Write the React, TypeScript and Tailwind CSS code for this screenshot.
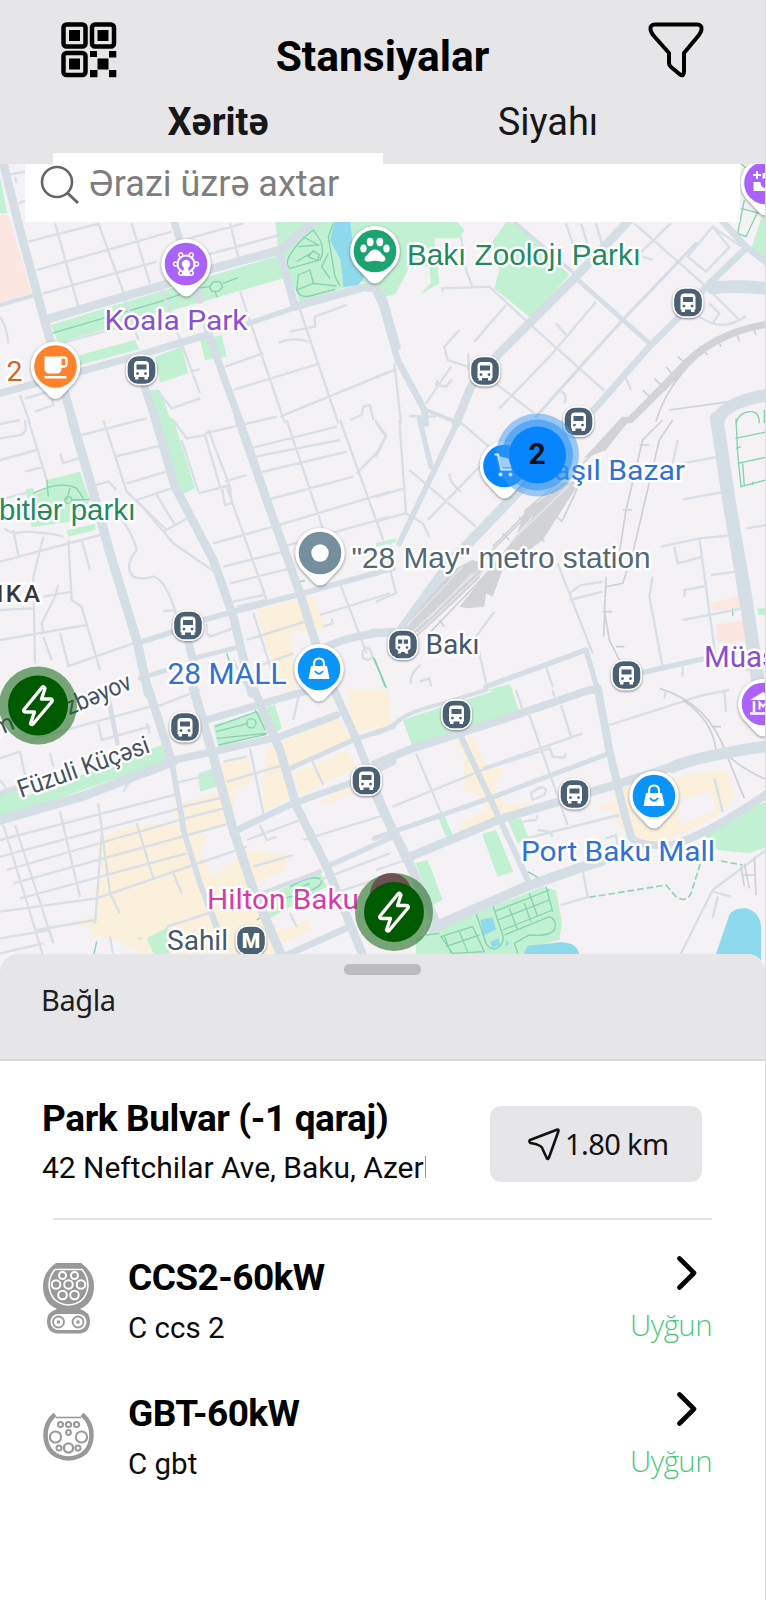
import React from "react";

type Tile = {
  x: number;
  y: number;
  pink?: string;
  green?: string;
  beige?: string;
  hole?: string;
  water?: string;
  minor?: string;
  roads?: [number, string][];
  path?: string;
  dash?: string;
  rail?: string;
  gaps?: string;
  track?: string;
};

/* Map vectors, stored per tile in units of a third of a pixel. */
const tiles: Tile[] = [
  {
    x: 0,
    y: 160,
    pink: "M0,165 L25,165 L95,400 L0,428Z",
    green:
      "M0,50 L22,160 L0,160Z M152,495 L830,288 L850,355 L175,548Z M240,585 L405,540 L418,568 L240,615Z M465,590 L545,560 L565,640 L480,668Z M450,690 L480,690 L515,790 L465,790Z M600,540 L665,525 L680,590 L615,600Z M825,180 L1190,180 L1190,400 L1150,400 L1090,365 L900,425 L835,270Z",
    water: "M1005,180 L1050,180 L1058,250 L1097,345 L1075,375 L1030,382 L1022,300 L990,240Z",
    minor:
      "M85,245 L300,190 M110,330 L515,215 M130,400 L470,305 M165,190 L235,440 M295,190 L375,410 M395,190 L450,370 M550,240 L730,190 M600,290 L840,225 M690,190 L715,290 M20,45 L75,35 M45,50 L50,70 M55,130 L80,120 M720,395 L855,790 M900,450 L1015,790 M1040,435 L945,470 L945,500 L870,515 M835,548 Q880,530 925,545 M675,620 L790,580 M700,690 L960,610 M840,770 L1170,635 M180,550 L480,470 M375,420 L415,540 M485,390 L600,700 M470,690 L515,745 L600,715 M570,635 L600,628 M0,470 Q20,500 25,550 M60,705 L90,790 M75,715 L200,680 M105,755 L160,735 L155,715 M1050,780 L1085,765 L1090,740 L1110,735 L1120,780",
    roads: [
      [26, "M5,-10 L60,210 L130,470 L150,540 L220,790"],
      [12, "M0,435 L95,408"],
      [26, "M140,478 L490,375 L640,325 L840,270 L950,180"],
      [22, "M0,700 L250,632 L400,590 L620,525"],
      [16, "M730,495 L880,445"],
      [24, "M840,280 L885,440 L1090,382 L1125,385 L1150,420 L1190,560"],
      [22, "M520,180 L545,255 L600,420 M620,500 L660,620 L722,790"],
      [24, "M430,670 L470,790"],
    ],
    path: "M155,520 L480,425 L590,385 M590,385 L630,380 M668,370 L715,353 M640,365 h20 l8,15 l-12,14 h-20 l-8,-14Z M645,395 L652,412 M1000,190 L985,230 L990,260 L1005,350 L1020,378 M940,210 Q900,240 880,270 Q850,310 870,325 L960,300 Q975,270 960,240Z M900,225 L955,255 L895,260 M890,305 L940,275 M985,280 L965,320 L990,355 M895,345 L930,330 L940,370 L890,390Z M940,370 L1010,378 M890,390 Q900,415 930,408 L1005,388 M925,290 l15,-18 l18,12 l-6,18Z",
  },
  {
    x: 376,
    y: 160,
    green:
      "M0,180 L240,180 L265,210 L250,235 L175,235 L190,370 L130,405 L165,370 L160,320 L100,320 L60,400 L20,415 L0,380Z M395,180 L430,200 L580,345 L465,475 L355,385 L370,330 L345,250Z M1160,160 L1175,160 L1175,320 L1125,270Z",
    minor:
      "M470,500 L685,692 M195,385 L290,382 L340,380 L470,500 M200,395 v-10 M255,230 L270,330 L290,382 M295,545 L390,435 M775,190 L985,375 M885,190 L760,310 M660,425 L530,580 L370,745 M250,510 L205,560 L215,600 L275,620 M225,620 L150,730 M185,660 L180,675 L210,680 L228,658 M277,580 v50 M320,640 L475,760 M540,490 L570,525 M555,695 Q575,700 565,730 M935,290 L990,335 L1060,262 L1010,200 Z M1010,200 L1095,260 M0,650 L55,630 M55,610 L75,790 M570,190 L590,250 M615,190 L640,270 M660,190 L680,260 M750,655 L765,690 M1000,390 L1090,480 M970,470 Q1040,520 1110,468 M1000,430 L1030,460 L1010,490 M800,290 L830,300 M100,768 L180,770",
    roads: [
      [10, "M415,185 L600,345"],
      [9, "M960,250 L740,480 L640,590 L480,770"],
      [26, "M760,180 L600,350 L360,590 L285,680 L240,790"],
      [20, "M0,395 L20,440 L65,600 L145,750 L150,790"],
      [12, "M150,750 L250,790"],
      [14, "M600,355 L820,550"],
      [20, "M1110,265 L1000,370 L900,480 L820,560 L640,765"],
      [38, "M1010,384 Q1060,375 1175,385"],
      [20, "M1040,185 L1110,260 L1175,310"],
      [38, "M1025,790 Q1030,730 1175,705"],
    ],
    path: "M1095,10 L1110,25 M1105,120 L1085,220 L1110,230 L1145,155 M1095,145 L1150,160 M1045,190 L1090,225 M1080,790 Q1090,755 1125,755 Q1150,755 1150,790 M1165,750 V790",
    track: "M840,785 Q870,680 965,590 M880,750 L1170,710 M800,690 l20,20 M835,655 l25,25 M870,620 l25,30 M905,590 l30,25 M970,560 l25,25 M1020,530 l15,30 M1080,515 l10,30 M1130,500 l10,25",
    rail: "M1175,482 Q1000,508 895,630 L738,790 L768,790 L915,645 Q1010,530 1175,503Z",
  },
  {
    x: 0,
    y: 420,
    green:
      "M470,-5 L520,-5 L585,205 L550,222 L515,140Z M140,180 L240,155 L268,235 L265,250 L210,305 L95,322 L85,260 L78,208 L100,205 L105,225 L140,205Z M200,330 L285,312 L287,330 L205,350Z M1150,370 L1175,362 V375Z",
    beige:
      "M770,565 L850,548 L940,528 L975,620 L930,640 L870,630 L880,690 L880,800 L850,810 L800,680Z",
    minor:
      "M0,55 L65,45 L78,30 L75,0 M85,0 L140,180 M0,12 L60,0 M0,120 L110,90 M75,155 L130,140 M180,100 L190,130 L235,115 M0,240 L80,218 M310,0 L380,215 L500,330 M245,45 L440,-5 M345,110 L490,75 M380,190 L500,155 M410,240 L530,200 M410,240 L520,370 L650,460 M490,335 L570,290 M470,225 L525,315 M270,200 L325,185 L350,210 M345,270 Q400,340 410,390 Q370,440 400,470 Q420,480 460,470 Q500,480 530,590 M490,573 L530,570 M0,425 L300,345 M15,325 Q30,345 80,335 Q160,340 190,350 M40,330 L55,405 M130,350 L100,470 L105,730 M205,360 L215,540 L245,560 L300,750 M245,360 L270,450 M175,495 L165,530 L125,610 L130,640 M0,660 L260,615 M130,530 L215,515 M0,570 L100,565 M180,640 L205,735 M130,650 L155,720 M200,740 L400,670 M520,0 L560,55 L615,45 L660,200 M625,30 L690,200 L695,250 L675,255 L665,200 M595,220 L690,195 M545,60 L595,215 M615,40 L830,-10 M675,185 L740,165 M750,85 L1010,20 M765,110 L1020,60 M770,160 L1040,95 M800,240 L1060,170 M820,320 L1170,215 M850,380 L1170,290 M680,200 L800,540 M860,0 L970,330 M1020,0 L1150,360 M1125,0 L1158,45 L1130,100 L1070,160 M640,370 L820,320 M670,440 L850,395 M690,490 L870,445 M700,545 L790,525 M710,560 L795,540 M620,610 L620,640 L630,650 L700,625 M960,585 L1170,520 M995,595 L998,610 L970,620 M1020,490 L1100,700 M760,580 L830,800 M740,660 L930,600 M770,740 L880,700 M1090,690 q10,-15 20,0 q15,25 -5,30 q-25,-5 -15,-30 M700,720 L740,800",
    roads: [
      [28, "M215,-5 L275,200 L330,400 L410,660 L445,820"],
      [26, "M465,-5 L525,200 L640,420 L700,590 L755,820"],
      [26, "M715,-5 L800,240 L900,520 L960,710"],
      [17, "M410,670 L520,635"],
      [17, "M610,600 L700,575 L890,525 L1180,445"],
      [24, "M560,650 L582,730"],
      [14, "M580,715 L720,680"],
      [24, "M980,680 Q1060,642 1180,635"],
      [14, "M420,775 L520,745"],
    ],
    path: "M140,175 L145,230 M100,220 Q180,180 230,205 L250,235 M210,205 L200,240 M195,240 a10,10 0 1 0 20,0 a10,10 0 1 0 -20,0 M215,240 L270,238 M900,485 L915,482 M680,700 L690,730 M1118,710 L1140,760 L1155,800",
  },
  {
    x: 376,
    y: 420,
    pink: "M1005,550 L1090,528 L1100,560 L1010,572Z M1020,615 L1105,600 L1118,660 L1070,670 L1025,665Z",
    green: "M325,812 L400,793 L412,812Z M0,370 L60,355 L60,365 L0,380Z M1145,565 h30 v20 h-30Z",
    minor:
      "M0,110 L30,50 L0,10 M70,0 L90,280 M0,230 L85,205 M0,305 L90,280 L140,310 L160,350 M100,150 L300,320 M220,160 Q220,190 255,215 M155,300 L330,120 M30,400 L60,520 L0,545 M245,0 L350,90 M545,430 L650,700 M580,520 L615,495 L680,485 M580,540 L680,515 M905,60 L890,130 M920,130 L1030,110 M920,238 L1050,215 M855,380 L970,355 L1020,720 M895,380 L905,430 L980,410 M970,355 L1080,345 M1005,465 L1080,455 M925,530 L925,510 L990,498 M920,600 L1100,565 M830,470 L820,530 L860,740 M355,575 L300,650 L330,790 M1110,325 L1170,315 M105,790 Q100,760 135,735 M130,785 L160,775 L165,800 M510,740 L530,800 M920,740 L920,770 M1110,750 L1170,740",
    roads: [
      [16, "M130,-5 L165,140"],
      [17, "M250,-5 L180,140 L70,370"],
      [30, "M450,190 L220,430 L80,625"],
      [40, "M1022,-5 L1060,250 L1110,540 L1150,810"],
      [24, "M-10,638 L70,638"],
      [16, "M330,800 L630,690 L665,810"],
      [16, "M800,757 L980,717"],
    ],
    path: "M1080,-5 L1085,100 L1095,200 L1170,180 M1078,55 L1175,35 M1080,85 L1095,80 M1085,130 L1170,112 M1100,130 L1105,200 M1130,185 v10 M-5,715 L32,805 M1070,565 v22",
    rail: "M250,560 L420,350 L440,290 L510,230 L580,190 L600,205 L545,290 L500,360 L380,450 L350,530 L330,520 L325,560 L275,565Z M610,130 L738,-10 L768,-10 L690,90 L625,115Z M90,640 L110,590 L230,450 L290,420 L325,430 L310,475 L200,580 L140,635Z M445,270 L590,150 L600,190 L500,240 L440,310Z",
    gaps: "M105,640 L330,430 M130,635 L345,430 M95,615 L260,440 M420,350 L580,195 M400,370 L470,290 M155,600 L290,460 M480,250 L590,160",
    track: "M120,650 L330,440 M150,650 L400,390 M330,410 L500,240 M350,380 L500,230 M600,150 L735,20 M540,230 L620,170 L560,300 M430,290 l15,20 M380,340 l20,20 M540,290 l20,15 M490,350 l15,15 M190,600 l15,20 M860,0 L800,60 L750,270 L730,400 M890,0 L850,60 L770,400 L740,490 L690,500 L685,570 L700,660 L740,740 M790,75 h30 M740,270 h28 M680,575 h28 M690,470 L683,650 M720,680 h25",
  },
  {
    x: 0,
    y: 690,
    green:
      "M0,318 L50,300 L60,325 L450,178 L485,165 L500,212 L0,387Z M640,105 L790,60 L805,130 L655,172Z M800,50 L825,43 L845,115 L825,130Z M595,250 L640,235 L650,290 L600,305Z M820,610 L960,545 L980,590 L800,690Z M440,745 L505,710 L510,800 L465,800Z",
    beige:
      "M665,220 L745,205 L760,270 L700,300 L705,410 L670,370Z M800,170 L840,160 L880,320 L790,365 L790,270Z M830,160 L1010,85 L1060,150 L960,200 L870,235Z M1040,0 L1170,0 L1170,100 L1060,130Z M880,250 L1040,180 L1070,230 L900,320Z M960,330 L1050,290 L1060,310 L970,345Z M515,350 L660,305 L675,400 L560,440Z M285,450 L400,405 L550,400 L620,440 L600,490 L640,560 L740,480 L860,495 L860,540 L760,580 L800,690 L850,720 L930,690 L930,720 L850,760 L830,800 L440,800 L330,740 L270,740 L290,640 L280,600 L310,560Z M235,690 L290,680 L285,705 L235,712Z M860,0 h40 l-40,20Z",
    minor:
      "M10,405 L130,800 M45,405 L160,760 M180,365 L240,620 M295,340 L330,610 L360,670 M410,400 L460,565 M305,430 L290,640 L285,700 M520,550 L545,610 M0,450 L540,310 M0,500 L540,355 M20,540 L540,390 M40,580 L690,400 M60,625 L560,490 M0,665 L290,625 L740,470 M110,720 L285,690 M0,745 L150,720 M0,790 L130,760 M550,350 L680,320 M555,385 L690,350 M370,305 L385,280 M520,280 L650,250 M780,405 L800,450 L830,440 M750,175 L790,370 M670,215 L740,200 M930,200 L970,285 M680,275 L850,225 M0,205 L60,185 L80,280 M0,270 L30,310 M150,190 L160,230 M90,150 L450,50 M295,100 L305,150 L450,110 M440,100 L450,130 M470,50 L600,0 M910,450 L1170,370 M740,450 L900,390 M1000,610 L1170,555 M870,670 L890,710 M500,710 L640,665 L655,710 M330,740 L340,800 M415,745 h12 M960,570 L1170,490 M900,0 L880,90 M760,530 L880,495",
    roads: [
      [26, "M445,-5 L495,150 L515,215"],
      [17, "M515,215 L545,380 L550,420 L600,580 L650,715"],
      [28, "M580,-5 L640,200 L700,420 L760,600 L850,810"],
      [26, "M760,-5 L840,180 L890,350 L980,530 L1090,800"],
      [24, "M1000,-5 L1070,150 L1175,420"],
      [28, "M-5,392 L250,318 L520,215"],
      [22, "M500,215 L640,185 L840,140 L1010,75"],
      [22, "M620,90 L790,40 L930,0"],
      [16, "M-5,312 L60,290"],
      [20, "M700,425 L880,340 L1050,280 L1180,215"],
      [15, "M860,240 L1060,150 L1180,110"],
      [16, "M980,530 L1180,440"],
      [14, "M760,620 L960,545"],
      [20, "M860,795 L1050,710"],
      [14, "M325,20 L352,160"],
    ],
    path: "M645,110 L770,65 L795,120 M648,125 L745,100 M650,145 L800,130 M655,165 L800,133 M740,100 a14,14 0 1 0 28,0 a14,14 0 1 0 -28,0 M765,60 L780,85 M870,590 Q940,550 965,570 Q970,600 850,625 M880,600 L930,580 M290,755 L280,800 M770,690 l20,-12",
  },
  {
    x: 376,
    y: 690,
    green:
      "M80,90 L200,50 L385,-5 L405,-5 L430,65 L110,170Z M185,380 L205,378 L230,435 L210,440Z M318,432 L360,420 L412,545 L365,560Z M118,520 L155,510 L200,630 L170,645Z M395,390 L435,385 L458,445 L425,460Z M985,435 L1140,345 L1175,335 L1175,470 L1120,490 L1025,480Z M120,745 L500,590 L540,600 L558,700 L550,750 L455,775 L440,800 L120,800Z",
    water:
      "M440,800 L455,767 Q500,764 550,757 Q605,755 612,800Z M1017,800 L1060,675 Q1072,652 1110,655 Q1152,665 1155,710 V860 L1017,840Z M313,690 L350,682 L360,718 L322,737Z M343,755 l25,-10 l5,20 l-25,8Z M390,750 l10,12 l-10,5Z",
    beige:
      "M240,150 L295,145 L335,238 L385,232 L350,290 L390,345 L470,338 L460,372 L255,422 L250,400 L330,360 L300,310 L262,300 L265,210Z M710,290 L1050,238 L1075,320 L1020,380 L890,440 L850,465 L770,440 L740,420 L720,390 L715,360 L670,360 L670,345 L715,335Z M0,40 L40,105 L0,118Z",
    hole: "M905,330 L1000,305 L1020,360 L915,405Z",
    minor:
      "M50,350 L320,240 L520,175 M120,190 L200,380 M460,75 L575,405 M555,45 L585,140 M320,235 L620,130 M700,105 L920,35 Q970,15 1060,0 M420,0 L440,60 M0,540 L90,510 M450,445 L730,375 M620,540 L635,620 M555,645 L640,620 M1170,480 L1010,600 L960,700 L910,800 M1010,605 L1065,620 M1025,620 L1010,685 M1045,0 L1050,65 M1015,265 L1040,365 M870,0 L865,25 M520,170 L530,200 L565,203 L570,190 M465,310 Q500,280 510,300 L505,315 L470,330Z M485,420 L520,425 L530,440 M440,395 L480,390 L485,375 M530,0 L535,20 M690,445 L720,435 L725,470",
    roads: [
      [12, "M-5,132 Q40,120 70,90 Q100,65 200,40 L330,0"],
      [24, "M-5,222 L110,175 L420,75 L640,0 L665,0"],
      [24, "M665,-5 L700,180 L740,350 L765,440 Q780,470 890,465 Q1000,430 1175,310"],
      [26, "M90,505 L380,385 L700,290 L890,230"],
      [34, "M890,232 Q950,202 1175,168"],
      [28, "M-5,305 L50,420 L100,520 L185,710"],
      [15, "M-5,445 L340,325 L700,190"],
      [18, "M255,140 L340,320 L460,580"],
      [30, "M165,715 L450,590 L620,530 L680,512"],
    ],
    path: "M455,545 L490,565 M195,740 L290,710 L325,785 L230,790Z M205,738 L225,790 M250,725 L275,785 M210,770 L310,735 M300,670 L330,760 Q350,790 375,765 Q385,750 380,735 L350,645 M355,665 L520,600 M365,690 L520,630 M380,720 L530,660 M385,735 L520,680 Q545,690 535,720 Q520,740 460,735 L415,760 L425,790 M400,655 L425,720 M445,640 L465,695 M510,590 L530,665 M460,610 L485,680 M150,735 l40,-5",
    dash: "M640,622 L870,585 L900,620 Q930,640 945,610 L975,515 M1035,513 L1100,525",
    track: "M850,-5 Q1000,40 1050,190 Q1100,240 1175,270 M920,30 Q1010,90 1020,180 M1010,110 h25 M1050,190 L1105,325 M1095,530 L1105,590 M1105,520 L1120,595 M1135,500 L1140,615 M1100,555 h35",
  },
];

type PathKey = "pink" | "green" | "beige" | "hole" | "water" | "minor" | "path" | "dash" | "rail" | "gaps" | "track";

function Layer({ name, className, dash }: { name: PathKey; className: string; dash?: string }) {
  return (
    <>
      {tiles.map((t, i) =>
        t[name] ? (
          <path
            key={i}
            d={t[name]}
            transform={`translate(${t.x} ${t.y}) scale(0.33333)`}
            className={className}
            strokeDasharray={dash}
          />
        ) : null,
      )}
    </>
  );
}

function Pin({ x, y, color, children }: { x: number; y: number; color: string; children?: React.ReactNode }) {
  return (
    <g transform={`translate(${x} ${y})`}>
      <path
        d="M0,-25 A25,25 0 0 1 19,16 L6,30 Q0,35 -6,30 L-19,16 A25,25 0 0 1 0,-25Z"
        fill="#fff"
        style={{ filter: "drop-shadow(0 1px 1.5px rgba(60,60,70,.55))" }}
      />
      <circle r="21.3" fill={color} />
      {children}
    </g>
  );
}

function Stop({ x, y, kind = "bus" }: { x: number; y: number; kind?: "bus" | "train" | "metro" }) {
  return (
    <g transform={`translate(${x} ${y})`}>
      <rect
        x="-15.5"
        y="-15.5"
        width="31"
        height="31"
        rx="12.5"
        fill="#fff"
        style={{ filter: "drop-shadow(0 1px 1px rgba(60,60,70,.6))" }}
      />
      <rect x="-13.8" y="-13.8" width="27.6" height="27.6" rx="10.5" fill="#4b6073" />
      {kind === "bus" && (
        <>
          <path d="M-7.5,-5 Q-7.5,-9 -3.5,-9 H3.5 Q7.5,-9 7.5,-5 V7 H6.5 V9.5 H3 V7 H-3 V9.5 H-6.5 V7 H-7.5Z" fill="#fff" />
          <rect x="-5" y="-5.5" width="10" height="5" fill="#4b6073" />
          <circle cx="-4" cy="3.6" r="1.4" fill="#4b6073" />
          <circle cx="4" cy="3.6" r="1.4" fill="#4b6073" />
        </>
      )}
      {kind === "train" && (
        <>
          <path d="M-7.5,-5 Q-7.5,-9 -3.5,-9 H3.5 Q7.5,-9 7.5,-5 V4 L4.5,6.5 L5.5,9 H2.5 L1.5,7.5 H-1.5 L-2.5,9 H-5.5 L-4.5,6.5 L-7.5,4Z" fill="#fff" />
          <rect x="-5" y="-5" width="4.2" height="4.2" fill="#4b6073" />
          <rect x="0.8" y="-5" width="4.2" height="4.2" fill="#4b6073" />
          <circle cx="-4" cy="3" r="1.3" fill="#4b6073" />
          <circle cx="4" cy="3" r="1.3" fill="#4b6073" />
        </>
      )}
      {kind === "metro" && (
        <text y="7.5" textAnchor="middle" className="fill-white font-['Roboto'] text-[21px] font-black">
          M
        </text>
      )}
    </g>
  );
}

function Charger({ x, y }: { x: number; y: number }) {
  return (
    <g transform={`translate(${x} ${y})`}>
      <circle r="39" fill="#1d6a1d" fillOpacity="0.58" />
      <circle r="30" fill="#005a00" />
      <path
        d="M4,-18 L-14,4 Q-15,6.500 -12.500,6.500 L-3.500,6.500 L-7.500,18 Q-6.500,20 -4.500,18 L14,-4 Q15,-6.500 12,-6.500 L3.500,-6.500 L7,-17 Q6,-20 4,-18Z"
        fill="none"
        stroke="#fff"
        strokeWidth="3.4"
        strokeLinejoin="round"
      />
    </g>
  );
}

function Bag() {
  return (
    <>
      <path d="M-8,-3 H8 L10.500,10 H-10.500Z" fill="#fff" />
      <path d="M-5,-2 V-5 Q-5,-10.500 0,-10.500 Q5,-10.500 5,-5 V-2" fill="none" stroke="#fff" strokeWidth="2.200" />
      <path d="M-4,2 Q0,7.500 4,2" fill="none" stroke="#0a94f7" strokeWidth="1.800" />
    </>
  );
}

function Label({
  x,
  y,
  w,
  color,
  font = "r",
  size = 28.5,
  rotate,
  children,
}: {
  x: number;
  y: number;
  w?: number;
  color: string;
  font?: "r" | "a";
  size?: number;
  rotate?: number;
  children: string;
}) {
  return (
    <text
      x={x}
      y={y}
      textLength={w}
      lengthAdjust="spacingAndGlyphs"
      fill={color}
      fontSize={size}
      stroke="#fff"
      strokeWidth="5"
      strokeLinejoin="round"
      paintOrder="stroke"
      transform={rotate ? `rotate(${rotate} ${x} ${y})` : undefined}
      className={font === "r" ? "font-['Roboto',sans-serif]" : "font-['Liberation_Sans',sans-serif]"}
    >
      {children}
    </text>
  );
}

function StationMap() {
  return (
    <svg viewBox="0 164 766 810" className="block h-[810px] w-[766px] max-w-none bg-[#f4f2f4]" role="img">
      <Layer name="pink" className="fill-[#fce6e1]" />
      <Layer name="beige" className="fill-[#fbf0dc]" />
      <Layer name="hole" className="fill-[#f4f2f4]" />
      <Layer name="green" className="fill-[#c1f0d3]" />
      <Layer name="water" className="fill-[#8fd9ed]" />
      <Layer name="path" className="fill-none stroke-[#85d3ae] stroke-[4px]" />
      <Layer name="dash" className="fill-none stroke-[#93d3b4] stroke-[5px]" dash="20 9" />
      <Layer name="minor" className="fill-none stroke-[#d8dfe6] stroke-[7px]" />
      <Layer name="track" className="fill-none stroke-[#cfd1d5] stroke-[5px]" />
      {tiles.map((t, i) => (
        <g
          key={i}
          transform={`translate(${t.x} ${t.y}) scale(0.33333)`}
          fill="none"
          stroke="#d5dde5"
          strokeLinecap="round"
          strokeLinejoin="round"
        >
          {t.roads?.map(([width, d], j) => <path key={j} d={d} strokeWidth={width} />)}
        </g>
      ))}
      <Layer name="rail" className="fill-[#d2d3d6]" />
      <Layer name="gaps" className="fill-none stroke-[#e6e6e9] stroke-[4px]" />

      <Stop x={141.500} y={370} />
      <Stop x={485} y={371} />
      <Stop x={688} y={302.500} />
      <Stop x={578.500} y={421.500} />
      <Stop x={188} y={625.500} />
      <Stop x={185} y={727} />
      <Stop x={366.500} y={780.500} />
      <Stop x={456.500} y={714.500} />
      <Stop x={574.500} y={794} />
      <Stop x={626.500} y={675} />
      <Stop x={403} y={644.500} kind="train" />
      <Stop x={251} y={940.500} kind="metro" />

      <Label x={104.500} y={329.500} w={143} color="#8a4fd3">Koala Park</Label>
      <Label x={407} y={265} w={234} size={29.500} color="#238a60" font="a">Bakı Zoolojı Parkı</Label>
      <Label x={6.500} y={380.500} color="#d9621f">2</Label>
      <Label x={-1} y={519.500} w={137} size={29.500} color="#238a60" font="a">bitlər parkı</Label>
      <Label x={351.500} y={567.500} w={299} size={29.500} color="#546873" font="a">"28 May" metro station</Label>
      <Label x={425.500} y={654} w={54} color="#46586b">Bakı</Label>
      <Label x={537} y={480} w={148} color="#3171d6">Yaşıl Bazar</Label>
      <Label x={167.500} y={683.500} w={119} size={29.500} color="#3171d6">28 MALL</Label>
      <Label x={521} y={861} w={194} color="#3171d6">Port Baku Mall</Label>
      <Label x={207} y={909} w={152} color="#d93aa8">Hilton Baku</Label>
      <Label x={167} y={950} w={61} color="#46586b">Sahil</Label>
      <Label x={704} y={666.500} size={29.500} color="#8a4fd3">Müasir</Label>
      <Label x={21} y={798} w={138} size={25} rotate={-19.500} color="#46525f">Füzuli Küçəsi</Label>
      <Label x={69} y={715.500} w={70} size={25} rotate={-23} color="#46525f">zbəyov</Label>
      <Label x={-4} y={737} size={25} rotate={-23} color="#46525f">m</Label>
      <text
        x="-3.500"
        y="602"
        stroke="#fff"
        strokeWidth="5"
        paintOrder="stroke"
        className="fill-[#36383c] font-['Roboto',sans-serif] text-[24.500px] font-medium tracking-[2.400px]"
      >
        IKA
      </text>

      <Pin x={186} y={264} color="#ab62fb">
        <circle r="8.500" fill="none" stroke="#fff" strokeWidth="2.200" />
        {[0, 60, 120, 180, 240, 300].map((a) => (
          <circle key={a} cx="0" cy="-10.500" r="2" fill="#ab62fb" stroke="#fff" strokeWidth="1.500" transform={`rotate(${a + 30})`} />
        ))}
        <circle r="4.200" fill="#fff" />
        <path d="M-1.500,0 H1.500 L3.500,12 H-3.500Z" fill="#fff" />
      </Pin>
      <Pin x={375} y={251} color="#1ba470">
        <ellipse cx="-11.500" cy="-2.500" rx="3.200" ry="4" fill="#fff" />
        <ellipse cx="-4.800" cy="-9" rx="3.400" ry="4.200" fill="#fff" />
        <ellipse cx="4.800" cy="-9" rx="3.400" ry="4.200" fill="#fff" />
        <ellipse cx="11.500" cy="-2.500" rx="3.200" ry="4" fill="#fff" />
        <path d="M0,-1.500 C5,-1.500 6,3 9.500,5.500 C12,9 9,11.500 5.500,10.500 Q0,9 -5.500,10.500 C-9,11.500 -12,9 -9.500,5.500 C-6,3 -5,-1.500 0,-1.500Z" fill="#fff" />
      </Pin>
      <Pin x={55.500} y={366.500} color="#fd822b">
        <path d="M-11,-10 H6 V2 Q6,7 1,7 H-6 Q-11,7 -11,2Z M-11,9.500 H11 V12 H-11Z" fill="#fff" />
        <path d="M5,-9 H8.500 Q11,-9 11,-6.500 V-3 Q11,0 8,0 H5" fill="none" stroke="#fff" strokeWidth="2.400" />
      </Pin>
      <Pin x={320} y={553} color="#758f9c">
        <circle r="8.700" fill="#fff" />
      </Pin>
      <Pin x={319} y={669} color="#0a94f7">
        <Bag />
      </Pin>
      <Pin x={654} y={796} color="#0a94f7">
        <Bag />
      </Pin>
      <circle cx="391" cy="894" r="21" fill="#d9319b" />
      <Pin x={504.500} y={466} color="#0785fd" />
      <Pin x={765.500} y={183} color="#ab62fb">
        <path d="M-12,-1 H-3 V-10 H12 V8 H-12Z M-9.500,-12 h2 v3 h3 v2 h-3 v3 h-2 v-3 h-3 v-2 h3Z" fill="#fff" />
        <circle r="5" fill="#ab62fb" />
      </Pin>
      <Pin x={763} y={704} color="#ab62fb">
        <path d="M-13,-4 L0,-12 L13,-4Z" fill="#fff" />
        <path d="M-9,-3 V8 M-13,9.500 H12" fill="none" stroke="#fff" strokeWidth="2.600" />
        <path d="M-3.500,5.500 V-1.500 L0,2.500 L3.500,-1.500 V5.500" fill="none" stroke="#fff" strokeWidth="2" />
      </Pin>

      <Charger x={38} y={705.500} />
      <Charger x={394} y={912} />

      <circle cx="537.500" cy="455" r="41.500" fill="#3f9bf3" fillOpacity="0.5" />
      <circle cx="537.500" cy="455" r="35.500" fill="#2a90f6" fillOpacity="0.55" />
      <circle cx="537.500" cy="455" r="28.500" fill="#0785fd" />
      <g transform="translate(503.500 465)">
        <path d="M-9,-10.500 H-5.500 L-2,4.500 H8" fill="none" stroke="#d6eaff" strokeWidth="2" />
        <path d="M-5,-9 L5,-6.500 L8,2.500 H-2.500Z" fill="#9dcdfd" />
        <circle cx="-3" cy="9.500" r="2" fill="#cfe6ff" />
        <circle cx="7" cy="9.500" r="2" fill="#b3d8ff" />
      </g>
      <text x="537" y="463.500" textAnchor="middle" className="fill-[#0a0f18] font-['Roboto',sans-serif] text-[30px] font-bold">
        2
      </text>
    </svg>
  );
}

function QrIcon() {
  return (
    <svg viewBox="0 0 56 56" className="h-14 w-14" aria-hidden="true">
      <g fill="none" stroke="#000" strokeWidth="4.500">
        <rect x="2.500" y="2.500" width="22" height="22" rx="3" />
        <rect x="31" y="2.500" width="22" height="22" rx="3" />
        <rect x="2.500" y="31" width="22" height="22" rx="3" />
      </g>
      <path d="M8,8 h11 v11 h-11Z M36.500,8 h11 v11 h-11Z M8,36.500 h11 v11 h-11Z M29,29 h7 v6 h-7Z M48,29 h7.300 v6.500 h-7.300Z M36.500,36.500 h11 v11 h-11Z M29,48 h7.500 v7.300 h-7.500Z M48,48 h7.300 v7.300 h-7.300Z" />
    </svg>
  );
}

function FunnelIcon() {
  return (
    <svg viewBox="0 0 56 56" className="h-14 w-14" aria-hidden="true">
      <path
        d="M7,2.500 H49 Q54,2.500 53.500,7.500 Q53,10 51,13 L36,31 V49 Q36,55 32,52.500 L23,45 Q21,43.500 21,41 V31 L5,13 Q3,10 2.500,7.500 Q2,2.500 7,2.500Z"
        fill="none"
        stroke="#000"
        strokeWidth="4"
        strokeLinejoin="round"
      />
    </svg>
  );
}

function Ring({ cx, cy, r, w = 1.800 }: { cx: number; cy: number; r: number; w?: number }) {
  return <circle cx={cx} cy={cy} r={r} fill="none" strokeWidth={w} />;
}

function Ccs2Icon() {
  return (
    <svg viewBox="0 0 51 71" className="h-[71px] w-[51px]" aria-hidden="true">
      <path d="M13,0 H38 Q51,9 51,23 Q51,40 37,46 Q47,49 47,58 Q47,70 36,70.500 H15 Q4,70 4,58 Q4,49 14,46 Q0,40 0,23 Q0,9 13,0Z" fill="#999" />
      <path d="M12,6.500 H39 Q45,13 45,23 Q43,41 25.500,42 Q8,41 6,23 Q6,13 12,6.500Z" fill="none" stroke="#fff" strokeWidth="1.600" />
      <rect x="7.500" y="51" width="36" height="16" rx="8" fill="#fff" />
      <g stroke="#fff">
        <Ring cx={19.500} cy={12.500} r={3.500} w={2} />
        <Ring cx={31.500} cy={12.500} r={3.500} w={2} />
        <Ring cx={13} cy={21.500} r={4.300} w={2} />
        <Ring cx={25.500} cy={21.500} r={4.300} w={2} />
        <Ring cx={38} cy={21.500} r={4.300} w={2} />
        <Ring cx={19.500} cy={32} r={4.300} w={2} />
        <Ring cx={31.500} cy={32} r={4.300} w={2} />
      </g>
      <g stroke="#999">
        <Ring cx={15.500} cy={59} r={5.500} />
        <Ring cx={35} cy={59} r={5.500} />
      </g>
      <circle cx="15.500" cy="59" r="1.800" fill="#999" />
      <circle cx="35" cy="59" r="1.800" fill="#999" />
    </svg>
  );
}

function GbtIcon() {
  return (
    <svg viewBox="0 0 51 48" className="h-12 w-[51px]" aria-hidden="true">
      <path
        d="M12,1.500 Q2.500,9 2.500,22.500 Q3.500,44 25.500,45.500 Q47.500,44 48.500,22.500 Q48.500,9 39,1.500"
        fill="none"
        stroke="#999"
        strokeWidth="4.600"
      />
      <path d="M13,4.500 H38" stroke="#999" strokeWidth="1.600" />
      <g stroke="#999">
        <Ring cx={17.500} cy={11.500} r={2.600} w={2} />
        <Ring cx={25.500} cy={11.500} r={2.600} w={2} />
        <Ring cx={33.500} cy={11.500} r={2.600} w={2} />
        <Ring cx={25.500} cy={19.500} r={2.400} w={2} />
        <Ring cx={12.500} cy={24} r={5.600} w={2} />
        <Ring cx={38.500} cy={24} r={5.600} w={2} />
        <Ring cx={16} cy={35} r={2.500} w={2} />
        <Ring cx={25.500} cy={35} r={4.600} w={2.400} />
        <Ring cx={35} cy={35} r={2.500} w={2} />
      </g>
    </svg>
  );
}

function Connector({ icon, name, detail }: { icon: React.ReactNode; name: string; detail: string }) {
  return (
    <li className="flex h-[136px] items-start">
      <div className="flex w-[85px] shrink-0">{icon}</div>
      <div className="flex grow flex-col items-start">
        <span className="text-[37px] font-bold leading-[44px] tracking-[-0.550px] text-black">{name}</span>
        <span className="mt-[9px] text-[29.500px] leading-[38px] text-[#0c0c0c]">{detail}</span>
      </div>
      <div className="flex flex-col items-end">
        <svg viewBox="0 0 20 34" className="mr-[15px] h-[34px] w-5" aria-hidden="true">
          <path d="M2.500,2.500 L17,17 L2.500,31.500" fill="none" stroke="#000" strokeWidth="4.600" strokeLinecap="round" strokeLinejoin="round" />
        </svg>
        <span className="mt-[15px] font-['Open_Sans','Noto_Sans',sans-serif] text-[29.500px] leading-[40px] tracking-[-0.600px] text-[#4fc97f] [font-weight:340]">
          Uyğun
        </span>
      </div>
    </li>
  );
}

export default function App() {
  return (
    <main className="flex h-[1600px] w-[766px] flex-col overflow-hidden border-r border-[#dedee0] bg-white font-['Roboto',sans-serif]">
      <header className="flex h-[164px] shrink-0 flex-col bg-[#e6e6e8]">
        <div className="flex h-[100px] items-start justify-between pl-[61px] pr-[61px] pt-[22px]">
          <QrIcon />
          <h1 className="mt-[15px] text-[42.500px] font-bold leading-[40px] text-black">Stansiyalar</h1>
          <FunnelIcon />
        </div>
        <nav className="grid h-16 grid-cols-2 pl-[53px] pr-[52px] text-center text-[38px] leading-[45px] text-[#17171a]">
          <div className="flex flex-col justify-between font-bold">
            <span>Xəritə</span>
            <span className="h-[11px] bg-white" />
          </div>
          <div>Siyahı</div>
        </nav>
      </header>

      <section className="relative shrink-0">
        <StationMap />
        <div className="absolute left-[25px] top-0 flex h-[58px] w-[715px] items-start gap-[9px] bg-white pl-[15px] text-[36px] text-[#7e7e7e]">
          <svg viewBox="0 0 40 40" className="mt-px h-10 w-10" aria-hidden="true">
            <circle cx="17" cy="17" r="15" fill="none" stroke="#666" strokeWidth="2.600" />
            <path d="M27.500,28 L38,38" stroke="#666" strokeWidth="3" />
          </svg>
          <span className="leading-[41px]">Ərazi üzrə axtar</span>
        </div>
      </section>

      <section className="relative -mt-5 flex grow flex-col rounded-t-[18px] bg-white">
        <div className="flex h-[107px] flex-col rounded-t-[18px] border-b-2 border-[#d9d9db] bg-[#e6e6e8] pl-[41px] pt-[10px]">
          <span className="ml-[303px] h-[11px] w-[77px] rounded-[5px] bg-[#bcbcbe]" />
          <span className="mt-[5px] font-['Noto_Sans',sans-serif] text-[29px] leading-[40px] tracking-[-0.400px] text-[#1d1d20]">Bağla</span>
        </div>
        <div className="flex items-start justify-between pl-[42px] pr-[63px] pt-[38px]">
          <div className="w-[384px] overflow-hidden whitespace-nowrap">
            <h2 className="text-[37px] font-bold leading-[40px] tracking-[-0.400px] text-black">Park Bulvar (-1 qaraj)</h2>
            <p className="mt-[10px] text-[30px] leading-[38px] tracking-[-0.030px] text-[#0c0c0c]">42 Neftchilar Ave, Baku, Azerbaijan</p>
          </div>
          <div className="mt-[7px] flex h-[76px] w-[212px] items-center rounded-[11px] bg-[#e6e6e8] pl-[37px]">
            <svg viewBox="0 0 34 34" className="h-[34px] w-[34px]" aria-hidden="true">
              <path d="M30.500,2.500 L3,13 Q1.500,14.500 3.500,16 Q16,18 16,23 L20,31.500 Q21,32.500 21.800,31 L31.500,4 Q31.500,2.300 30.500,2.500Z" fill="none" stroke="#111" strokeWidth="2.600" strokeLinejoin="round" />
            </svg>
            <span className="ml-1 font-['Noto_Sans',sans-serif] text-[29px] leading-[40px] tracking-[-0.600px] text-[#111]">1.80 km</span>
          </div>
        </div>
        <hr className="mx-[53px] mt-[31px] border-t-2 border-[#e4e4e6]" />
        <ul className="flex flex-col pl-[43px] pr-[53px] pt-[36px]">
          <Connector icon={<div className="mt-[7px]"><Ccs2Icon /></div>} name="CCS2-60kW" detail="C ccs 2" />
          <Connector icon={<div className="mt-[21px]"><GbtIcon /></div>} name="GBT-60kW" detail="C gbt" />
        </ul>
      </section>
    </main>
  );
}
